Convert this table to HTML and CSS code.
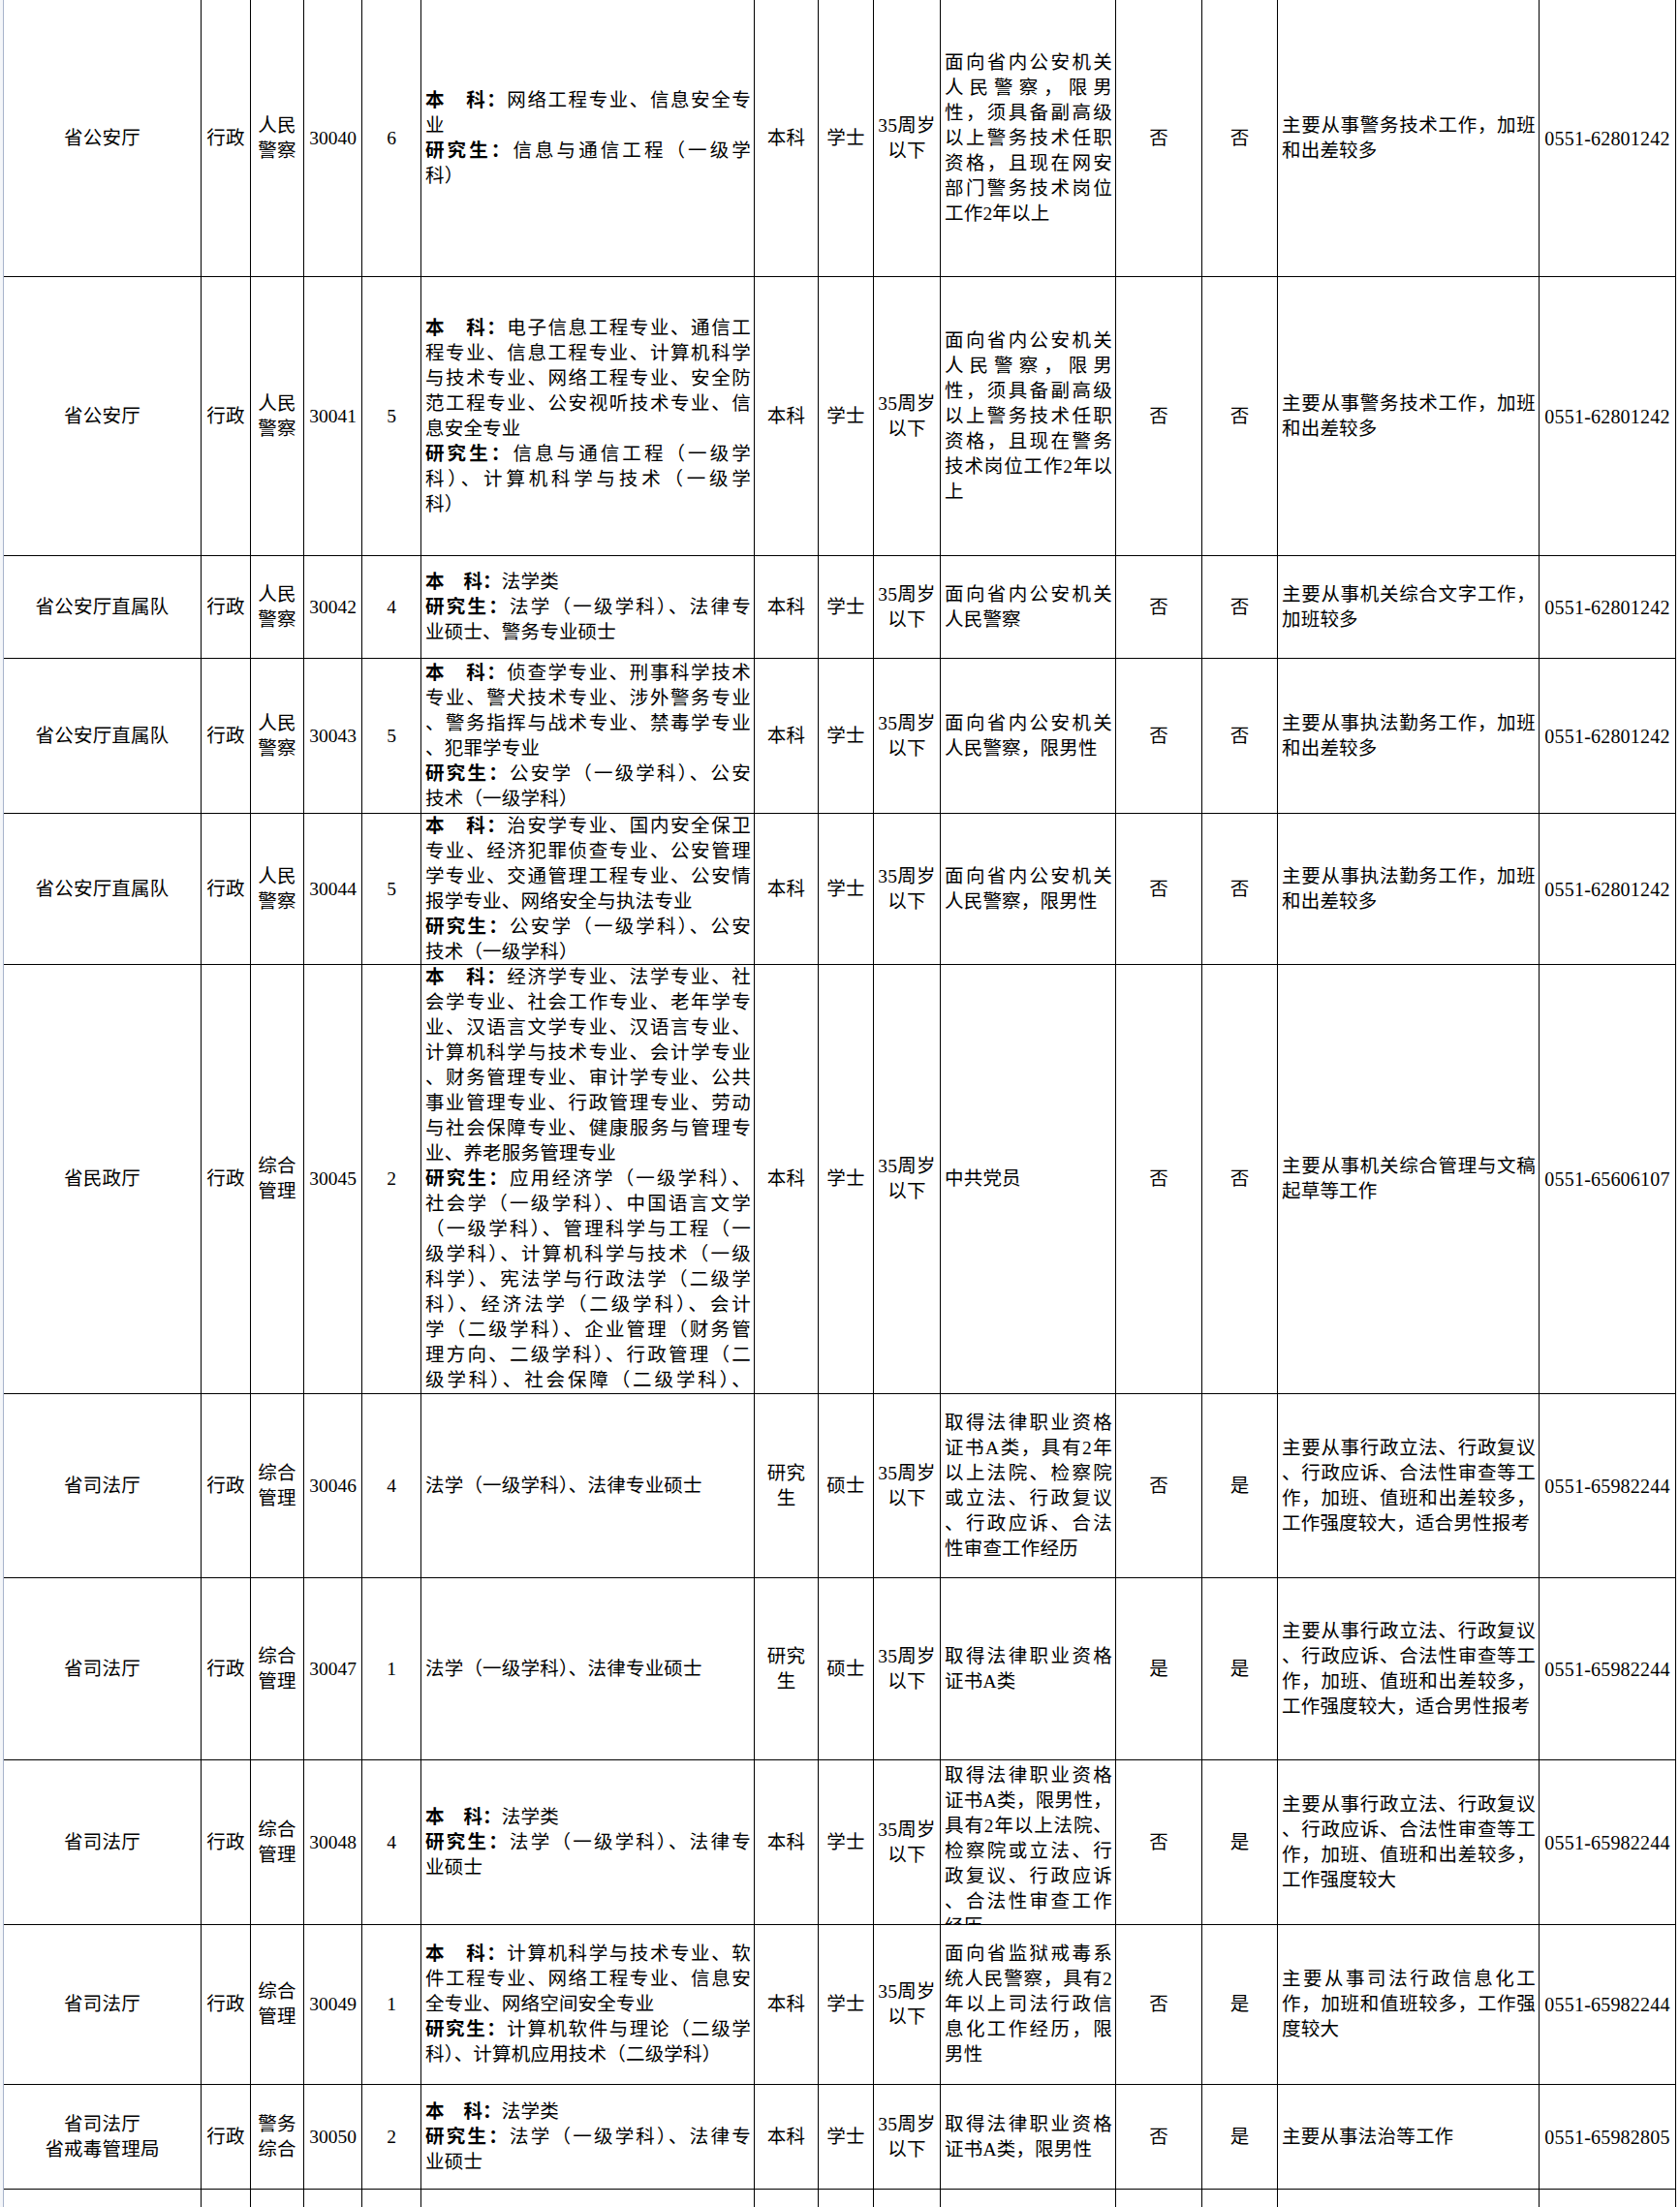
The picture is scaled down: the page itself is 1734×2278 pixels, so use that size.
FILE: index.html
```html
<!DOCTYPE html>
<html lang="zh-CN">
<head>
<meta charset="utf-8">
<title>职位表</title>
<link rel="stylesheet" href="styles.css">
</head>
<body>
<div class="page">
<div class="gutter"></div>
<div class="sheet">

<!-- 30040 -->
<div class="c">省公安厅</div>
<div class="c">行政</div>
<div class="c">人民<br>警察</div>
<div class="c num">30040</div>
<div class="c num">6</div>
<div class="c t w6">
<div class="j"><b>本　科：</b>网络工程专业、信息安全专</div>
<div>业</div>
<div class="j"><b>研究生：</b>信息与通信工程（一级学</div>
<div>科）</div>
</div>
<div class="c">本科</div>
<div class="c">学士</div>
<div class="c">35周岁<br>以下</div>
<div class="c t">
<div class="j">面向省内公安机关</div>
<div class="j">人民警察，限男</div>
<div class="j">性，须具备副高级</div>
<div class="j">以上警务技术任职</div>
<div class="j">资格，且现在网安</div>
<div class="j">部门警务技术岗位</div>
<div>工作2年以上</div>
</div>
<div class="c">否</div>
<div class="c">否</div>
<div class="c t">
<div class="j">主要从事警务技术工作，加班</div>
<div>和出差较多</div>
</div>
<div class="c num tel">0551-62801242</div>

<!-- 30041 -->
<div class="c">省公安厅</div>
<div class="c">行政</div>
<div class="c">人民<br>警察</div>
<div class="c num">30041</div>
<div class="c num">5</div>
<div class="c t w6">
<div class="j"><b>本　科：</b>电子信息工程专业、通信工</div>
<div class="j">程专业、信息工程专业、计算机科学</div>
<div class="j">与技术专业、网络工程专业、安全防</div>
<div class="j">范工程专业、公安视听技术专业、信</div>
<div>息安全专业</div>
<div class="j"><b>研究生：</b>信息与通信工程（一级学</div>
<div class="j">科）、计算机科学与技术（一级学</div>
<div>科）</div>
</div>
<div class="c">本科</div>
<div class="c">学士</div>
<div class="c">35周岁<br>以下</div>
<div class="c t">
<div class="j">面向省内公安机关</div>
<div class="j">人民警察，限男</div>
<div class="j">性，须具备副高级</div>
<div class="j">以上警务技术任职</div>
<div class="j">资格，且现在警务</div>
<div class="j">技术岗位工作2年以</div>
<div>上</div>
</div>
<div class="c">否</div>
<div class="c">否</div>
<div class="c t">
<div class="j">主要从事警务技术工作，加班</div>
<div>和出差较多</div>
</div>
<div class="c num tel">0551-62801242</div>

<!-- 30042 -->
<div class="c">省公安厅直属队</div>
<div class="c">行政</div>
<div class="c">人民<br>警察</div>
<div class="c num">30042</div>
<div class="c num">4</div>
<div class="c t w6">
<div><b>本　科：</b>法学类</div>
<div class="j"><b>研究生：</b>法学（一级学科）、法律专</div>
<div>业硕士、警务专业硕士</div>
</div>
<div class="c">本科</div>
<div class="c">学士</div>
<div class="c">35周岁<br>以下</div>
<div class="c t">
<div class="j">面向省内公安机关</div>
<div>人民警察</div>
</div>
<div class="c">否</div>
<div class="c">否</div>
<div class="c t">
<div class="j">主要从事机关综合文字工作，</div>
<div>加班较多</div>
</div>
<div class="c num tel">0551-62801242</div>

<!-- 30043 -->
<div class="c">省公安厅直属队</div>
<div class="c">行政</div>
<div class="c">人民<br>警察</div>
<div class="c num">30043</div>
<div class="c num">5</div>
<div class="c t w6">
<div class="j"><b>本　科：</b>侦查学专业、刑事科学技术</div>
<div class="j">专业、警犬技术专业、涉外警务专业</div>
<div class="j">、警务指挥与战术专业、禁毒学专业</div>
<div>、犯罪学专业</div>
<div class="j"><b>研究生：</b>公安学（一级学科）、公安</div>
<div>技术（一级学科）</div>
</div>
<div class="c">本科</div>
<div class="c">学士</div>
<div class="c">35周岁<br>以下</div>
<div class="c t">
<div class="j">面向省内公安机关</div>
<div>人民警察，限男性</div>
</div>
<div class="c">否</div>
<div class="c">否</div>
<div class="c t">
<div class="j">主要从事执法勤务工作，加班</div>
<div>和出差较多</div>
</div>
<div class="c num tel">0551-62801242</div>

<!-- 30044 -->
<div class="c">省公安厅直属队</div>
<div class="c">行政</div>
<div class="c">人民<br>警察</div>
<div class="c num">30044</div>
<div class="c num">5</div>
<div class="c t w6">
<div class="j"><b>本　科：</b>治安学专业、国内安全保卫</div>
<div class="j">专业、经济犯罪侦查专业、公安管理</div>
<div class="j">学专业、交通管理工程专业、公安情</div>
<div>报学专业、网络安全与执法专业</div>
<div class="j"><b>研究生：</b>公安学（一级学科）、公安</div>
<div>技术（一级学科）</div>
</div>
<div class="c">本科</div>
<div class="c">学士</div>
<div class="c">35周岁<br>以下</div>
<div class="c t">
<div class="j">面向省内公安机关</div>
<div>人民警察，限男性</div>
</div>
<div class="c">否</div>
<div class="c">否</div>
<div class="c t">
<div class="j">主要从事执法勤务工作，加班</div>
<div>和出差较多</div>
</div>
<div class="c num tel">0551-62801242</div>

<!-- 30045 -->
<div class="c">省民政厅</div>
<div class="c">行政</div>
<div class="c">综合<br>管理</div>
<div class="c num">30045</div>
<div class="c num">2</div>
<div class="c t w6">
<div class="j"><b>本　科：</b>经济学专业、法学专业、社</div>
<div class="j">会学专业、社会工作专业、老年学专</div>
<div class="j">业、汉语言文学专业、汉语言专业、</div>
<div class="j">计算机科学与技术专业、会计学专业</div>
<div class="j">、财务管理专业、审计学专业、公共</div>
<div class="j">事业管理专业、行政管理专业、劳动</div>
<div class="j">与社会保障专业、健康服务与管理专</div>
<div>业、养老服务管理专业</div>
<div class="j"><b>研究生：</b>应用经济学（一级学科）、</div>
<div class="j">社会学（一级学科）、中国语言文学</div>
<div class="j">（一级学科）、管理科学与工程（一</div>
<div class="j">级学科）、计算机科学与技术（一级</div>
<div class="j">科学）、宪法学与行政法学（二级学</div>
<div class="j">科）、经济法学（二级学科）、会计</div>
<div class="j">学（二级学科）、企业管理（财务管</div>
<div class="j">理方向、二级学科）、行政管理（二</div>
<div class="j">级学科）、社会保障（二级学科）、</div>
</div>
<div class="c">本科</div>
<div class="c">学士</div>
<div class="c">35周岁<br>以下</div>
<div class="c t">
<div>中共党员</div>
</div>
<div class="c">否</div>
<div class="c">否</div>
<div class="c t">
<div class="j">主要从事机关综合管理与文稿</div>
<div>起草等工作</div>
</div>
<div class="c num tel">0551-65606107</div>

<!-- 30046 -->
<div class="c">省司法厅</div>
<div class="c">行政</div>
<div class="c">综合<br>管理</div>
<div class="c num">30046</div>
<div class="c num">4</div>
<div class="c t w6">
<div>法学（一级学科）、法律专业硕士</div>
</div>
<div class="c">研究<br>生</div>
<div class="c">硕士</div>
<div class="c">35周岁<br>以下</div>
<div class="c t">
<div class="j">取得法律职业资格</div>
<div class="j">证书A类，具有2年</div>
<div class="j">以上法院、检察院</div>
<div class="j">或立法、行政复议</div>
<div class="j">、行政应诉、合法</div>
<div>性审查工作经历</div>
</div>
<div class="c">否</div>
<div class="c">是</div>
<div class="c t">
<div class="j">主要从事行政立法、行政复议</div>
<div class="j">、行政应诉、合法性审查等工</div>
<div class="j">作，加班、值班和出差较多，</div>
<div>工作强度较大，适合男性报考</div>
</div>
<div class="c num tel">0551-65982244</div>

<!-- 30047 -->
<div class="c">省司法厅</div>
<div class="c">行政</div>
<div class="c">综合<br>管理</div>
<div class="c num">30047</div>
<div class="c num">1</div>
<div class="c t w6">
<div>法学（一级学科）、法律专业硕士</div>
</div>
<div class="c">研究<br>生</div>
<div class="c">硕士</div>
<div class="c">35周岁<br>以下</div>
<div class="c t">
<div class="j">取得法律职业资格</div>
<div>证书A类</div>
</div>
<div class="c">是</div>
<div class="c">是</div>
<div class="c t">
<div class="j">主要从事行政立法、行政复议</div>
<div class="j">、行政应诉、合法性审查等工</div>
<div class="j">作，加班、值班和出差较多，</div>
<div>工作强度较大，适合男性报考</div>
</div>
<div class="c num tel">0551-65982244</div>

<!-- 30048 -->
<div class="c">省司法厅</div>
<div class="c">行政</div>
<div class="c">综合<br>管理</div>
<div class="c num">30048</div>
<div class="c num">4</div>
<div class="c t w6">
<div><b>本　科：</b>法学类</div>
<div class="j"><b>研究生：</b>法学（一级学科）、法律专</div>
<div>业硕士</div>
</div>
<div class="c">本科</div>
<div class="c">学士</div>
<div class="c">35周岁<br>以下</div>
<div class="c t clip">
<div class="j">取得法律职业资格</div>
<div class="j">证书A类，限男性，</div>
<div class="j">具有2年以上法院、</div>
<div class="j">检察院或立法、行</div>
<div class="j">政复议、行政应诉</div>
<div class="j">、合法性审查工作</div>
<div>经历</div>
</div>
<div class="c">否</div>
<div class="c">是</div>
<div class="c t">
<div class="j">主要从事行政立法、行政复议</div>
<div class="j">、行政应诉、合法性审查等工</div>
<div class="j">作，加班、值班和出差较多，</div>
<div>工作强度较大</div>
</div>
<div class="c num tel">0551-65982244</div>

<!-- 30049 -->
<div class="c">省司法厅</div>
<div class="c">行政</div>
<div class="c">综合<br>管理</div>
<div class="c num">30049</div>
<div class="c num">1</div>
<div class="c t w6">
<div class="j"><b>本　科：</b>计算机科学与技术专业、软</div>
<div class="j">件工程专业、网络工程专业、信息安</div>
<div>全专业、网络空间安全专业</div>
<div class="j"><b>研究生：</b>计算机软件与理论（二级学</div>
<div>科）、计算机应用技术（二级学科）</div>
</div>
<div class="c">本科</div>
<div class="c">学士</div>
<div class="c">35周岁<br>以下</div>
<div class="c t">
<div class="j">面向省监狱戒毒系</div>
<div class="j">统人民警察，具有2</div>
<div class="j">年以上司法行政信</div>
<div class="j">息化工作经历，限</div>
<div>男性</div>
</div>
<div class="c">否</div>
<div class="c">是</div>
<div class="c t">
<div class="j">主要从事司法行政信息化工</div>
<div class="j">作，加班和值班较多，工作强</div>
<div>度较大</div>
</div>
<div class="c num tel">0551-65982244</div>

<!-- 30050 -->
<div class="c">省司法厅<br>省戒毒管理局</div>
<div class="c">行政</div>
<div class="c">警务<br>综合</div>
<div class="c num">30050</div>
<div class="c num">2</div>
<div class="c t w6">
<div><b>本　科：</b>法学类</div>
<div class="j"><b>研究生：</b>法学（一级学科）、法律专</div>
<div>业硕士</div>
</div>
<div class="c">本科</div>
<div class="c">学士</div>
<div class="c">35周岁<br>以下</div>
<div class="c t">
<div class="j">取得法律职业资格</div>
<div>证书A类，限男性</div>
</div>
<div class="c">否</div>
<div class="c">是</div>
<div class="c t">
<div>主要从事法治等工作</div>
</div>
<div class="c num tel">0551-65982805</div>

<!-- partial row -->
<div class="c"></div>
<div class="c"></div>
<div class="c"></div>
<div class="c"></div>
<div class="c"></div>
<div class="c"></div>
<div class="c"></div>
<div class="c"></div>
<div class="c"></div>
<div class="c"></div>
<div class="c"></div>
<div class="c"></div>
<div class="c"></div>
<div class="c"></div>

</div>
</div>
</body>
</html>
```

FILE: styles.css
```css
html, body {
  margin: 0;
  padding: 0;
}

body {
  background: #f4f6f9;
  color: #000;
  font-family: "Liberation Serif", "Noto Sans CJK SC", sans-serif;
  font-size: 19.5px;
  letter-spacing: 0.2px;
  overflow: hidden;
}

.page {
  display: flex;
  min-height: 2278px;
}

.gutter {
  flex: none;
  width: 3px;
  border-right: 1px solid #a8b3cb;
}

.sheet {
  flex: 1;
  background: #fff;
  display: grid;
  grid-template-columns: 204px 51px 55px 60px 61px 344px 66px 57px 69px 181px 89px 78px 270px 141px;
  grid-template-rows: 286px 288px 106px 160px 156px 443px 190px 188px 170px 165px 108px 60px;
  align-content: start;
  justify-content: start;
}

.c {
  box-sizing: border-box;
  border-right: 1px solid #000;
  border-bottom: 1px solid #000;
  display: flex;
  flex-direction: column;
  justify-content: center;
  overflow: hidden;
  line-height: 26px;
  padding: 0 2px;
  text-align: center;
  white-space: nowrap;
}

.c b {
  font-weight: 700;
}

.t {
  text-align: left;
  padding: 0 3px 0 4px;
  white-space: normal;
}

.j {
  text-align: justify;
  text-align-last: justify;
}

.num {
  font-size: 19.5px;
  letter-spacing: 0;
}

.tel {
  font-size: 20px;
  letter-spacing: 0.2px;
  padding: 0 1px;
}

.clip {
  justify-content: flex-start;
  padding-top: 3px;
}
```
